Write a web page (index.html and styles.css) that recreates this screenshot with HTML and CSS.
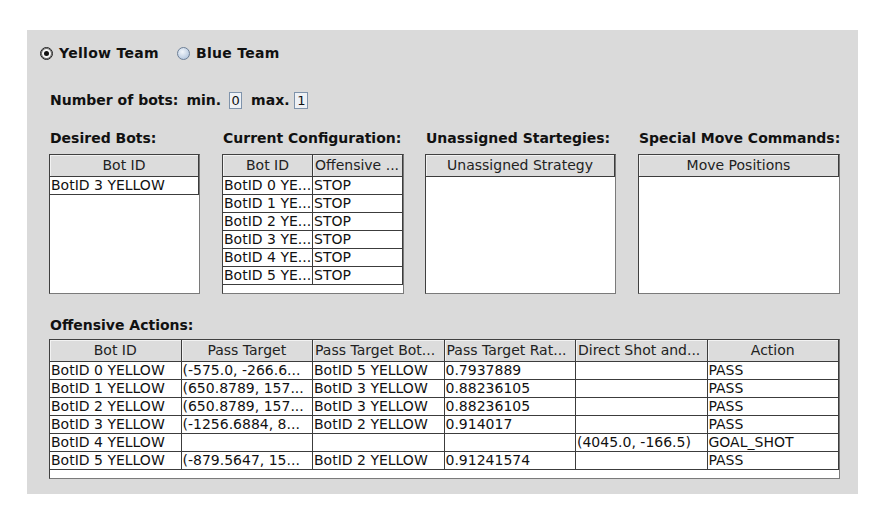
FILE: index.html
```html
<!DOCTYPE html>
<html lang="en">
<head>
  <meta charset="UTF-8" />
  <title>Offensive Strategy</title>
  <link rel="stylesheet" href="styles.css">
</head>
<body>
  <div class="panel">
    <div class="teams">
      <label class="radio"><span class="dot on"></span>Yellow Team</label>
      <label class="radio"><span class="dot blue"></span>Blue Team</label>
    </div>

    <div class="bots">
      <span class="lbl">Number of bots:</span>
      <span class="lbl">min.</span><span class="num">0</span>
      <span class="lbl max">max.</span><span class="num">1</span>
    </div>

    <div class="lists">
      <div class="col desired">
        <div class="title">Desired Bots:</div>
        <div class="box">
          <div class="row one">
            <div class="hcell">Bot ID</div>
          </div>
          <div class="row one">
            <div class="cell">BotID 3 YELLOW</div>
          </div>
        </div>
      </div>

      <div class="col current">
        <div class="title">Current Configuration:</div>
        <div class="box">
          <div class="row two">
            <div class="hcell">Bot ID</div>
            <div class="hcell left">Offensive ...</div>
          </div>
          <div class="row two"><div class="cell">BotID 0 YE...</div><div class="cell">STOP</div></div>
          <div class="row two"><div class="cell">BotID 1 YE...</div><div class="cell">STOP</div></div>
          <div class="row two"><div class="cell">BotID 2 YE...</div><div class="cell">STOP</div></div>
          <div class="row two"><div class="cell">BotID 3 YE...</div><div class="cell">STOP</div></div>
          <div class="row two"><div class="cell">BotID 4 YE...</div><div class="cell">STOP</div></div>
          <div class="row two"><div class="cell">BotID 5 YE...</div><div class="cell">STOP</div></div>
        </div>
      </div>

      <div class="col unassigned">
        <div class="title">Unassigned Startegies:</div>
        <div class="box">
          <div class="row one">
            <div class="hcell">Unassigned Strategy</div>
          </div>
        </div>
      </div>

      <div class="col moves">
        <div class="title">Special Move Commands:</div>
        <div class="box">
          <div class="row one">
            <div class="hcell">Move Positions</div>
          </div>
        </div>
      </div>
    </div>

    <div class="title offense">Offensive Actions:</div>
    <div class="box big">
      <div class="row six">
        <div class="hcell">Bot ID</div>
        <div class="hcell">Pass Target</div>
        <div class="hcell left">Pass Target Bot...</div>
        <div class="hcell left">Pass Target Rat...</div>
        <div class="hcell left">Direct Shot and...</div>
        <div class="hcell">Action</div>
      </div>
      <div class="row six">
        <div class="cell">BotID 0 YELLOW</div><div class="cell">(-575.0, -266.6...</div><div class="cell">BotID 5 YELLOW</div>
        <div class="cell">0.7937889</div><div class="cell"></div><div class="cell">PASS</div>
      </div>
      <div class="row six">
        <div class="cell">BotID 1 YELLOW</div><div class="cell">(650.8789, 157...</div><div class="cell">BotID 3 YELLOW</div>
        <div class="cell">0.88236105</div><div class="cell"></div><div class="cell">PASS</div>
      </div>
      <div class="row six">
        <div class="cell">BotID 2 YELLOW</div><div class="cell">(650.8789, 157...</div><div class="cell">BotID 3 YELLOW</div>
        <div class="cell">0.88236105</div><div class="cell"></div><div class="cell">PASS</div>
      </div>
      <div class="row six">
        <div class="cell">BotID 3 YELLOW</div><div class="cell">(-1256.6884, 8...</div><div class="cell">BotID 2 YELLOW</div>
        <div class="cell">0.914017</div><div class="cell"></div><div class="cell">PASS</div>
      </div>
      <div class="row six">
        <div class="cell">BotID 4 YELLOW</div><div class="cell"></div><div class="cell"></div>
        <div class="cell"></div><div class="cell">(4045.0, -166.5)</div><div class="cell">GOAL_SHOT</div>
      </div>
      <div class="row six">
        <div class="cell">BotID 5 YELLOW</div><div class="cell">(-879.5647, 15...</div><div class="cell">BotID 2 YELLOW</div>
        <div class="cell">0.91241574</div><div class="cell"></div><div class="cell">PASS</div>
      </div>
    </div>
  </div>
</body>
</html>
```

FILE: styles.css
```css
body {
  margin: 0;
  background: #fff;
  font-family: "DejaVu Sans", sans-serif;
  color: #111;
}
.panel {
  margin: 30px 0 0 27px;
  width: 831px;
  height: 464px;
  box-sizing: border-box;
  background: #dadada;
  padding: 13px 0 0 22px;
}
.teams {
  display: flex;
  gap: 18px;
  height: 20px;
  align-items: center;
  margin-left: -9px;
  font-size: 14px;
  font-weight: bold;
  letter-spacing: 0.3px;
}
.radio {
  display: flex;
  align-items: center;
  gap: 6px;
}
.dot {
  position: relative;
  width: 13px;
  height: 13px;
  box-sizing: border-box;
  border-radius: 50%;
  border: 1px solid #1e1e1e;
  box-shadow: inset 0 0 0 1px #6a6a6a;
  background: #f6f6f6;
}
.dot.on::after {
  content: "";
  position: absolute;
  left: 3px;
  top: 3px;
  width: 5px;
  height: 5px;
  border-radius: 50%;
  background: #111;
}
.dot.blue {
  border-color: #6d7f96;
  box-shadow: none;
  background: radial-gradient(circle at 40% 35%, #f2f6fb 0, #bccde2 70%, #9fb4cf 100%);
}
.bots {
  margin-top: 27px;
  height: 20px;
  display: flex;
  align-items: center;
  padding-left: 1px;
  font-size: 14px;
  font-weight: bold;
}
.lbl {
  margin-right: 8px;
}
.lbl + .lbl {
  margin-right: 8px;
}
.lbl.max {
  margin-left: 9px;
  margin-right: 5px;
}
.num {
  width: 13px;
  height: 17px;
  box-sizing: border-box;
  border: 1px solid #7f93ab;
  background: #eef1f5;
  font-weight: normal;
  font-size: 13px;
  line-height: 15px;
  text-align: center;
}
.num:last-child {
  width: 14px;
}
.lists {
  display: flex;
  margin-top: 19px;
}
.col.desired { width: 151px; margin-right: 22px; }
.col.current { width: 182px; margin-right: 21px; }
.col.unassigned { width: 191px; margin-right: 22px; }
.col.moves { width: 202px; }
.title {
  height: 18px;
  line-height: 18px;
  font-size: 14px;
  font-weight: bold;
  padding-left: 1px;
  margin-bottom: 7px;
  white-space: nowrap;
}
.title.offense {
  margin-top: 22px;
  margin-bottom: 5px;
}
.box {
  height: 140px;
  box-sizing: border-box;
  border: 1px solid #404040;
  border-right-color: #7a7a7a;
  border-bottom-color: #7a7a7a;
  background: #fff;
  overflow: hidden;
}
.box.big {
  width: 791px;
}
.row {
  display: grid;
}
.row.one { grid-template-columns: 1fr; }
.row.two { grid-template-columns: 90px 1fr; }
.row.six { grid-template-columns: repeat(6, 1fr); }
.hcell {
  height: 21px;
  line-height: 21px;
  background: #dcdcdc;
  border-right: 1px solid #3c3c3c;
  border-bottom: 1px solid #3c3c3c;
  box-shadow: inset 1px 1px 0 #f2f2f2;
  color: #222;
  font-size: 14px;
  text-align: center;
  white-space: nowrap;
  overflow: hidden;
}
.hcell.left {
  text-align: left;
  padding-left: 2px;
}
.cell {
  height: 17px;
  line-height: 17px;
  border-right: 1px solid #3c3c3c;
  border-bottom: 1px solid #3c3c3c;
  padding-left: 1px;
  font-size: 14px;
  white-space: nowrap;
  overflow: hidden;
}
```
